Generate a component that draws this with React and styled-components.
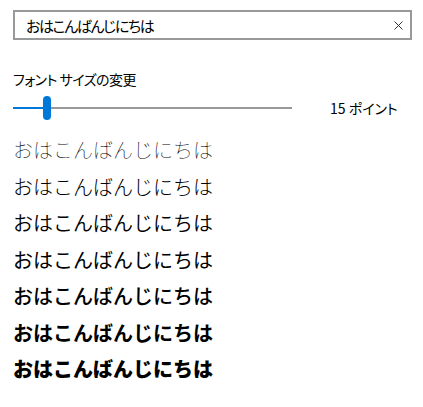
import React, { useState } from "react";
import styled, { createGlobalStyle } from "styled-components";

const GlobalStyle = createGlobalStyle`
  body {
    margin: 0;
    background: #fff;
    font-family: "Noto Sans CJK JP", "Noto Sans", sans-serif;
    color: #000;
  }
`;

const Page = styled.div`
  padding: 10px 11px 0 13px;
  display: flex;
  flex-direction: column;
`;

const SearchBox = styled.div`
  box-sizing: border-box;
  width: 399px;
  height: 30px;
  border: 2px solid #999;
  display: flex;
  align-items: center;
  padding: 0 7px 0 11px;
`;

const SearchInput = styled.input`
  flex: 1;
  border: none;
  outline: none;
  padding: 0;
  font-family: inherit;
  font-size: 15px;
  letter-spacing: -1.4px;
  font-feature-settings: "palt";
  color: #000;
  background: transparent;
`;

const ClearButton = styled.button`
  border: none;
  background: none;
  padding: 0;
  width: 9px;
  height: 9px;
  display: flex;
  cursor: pointer;
`;

const Label = styled.div`
  margin-top: 29px;
  font-size: 14px;
  line-height: 20px;
  letter-spacing: -0.5px;
  font-feature-settings: "palt";
  color: #000;
`;

const SliderRow = styled.div`
  margin-top: 7px;
  height: 24px;
  display: flex;
  align-items: center;
`;

const Track = styled.div`
  position: relative;
  width: 279px;
  height: 2px;
  background: #999;
`;

const Fill = styled.div`
  height: 2px;
  background: #0078d7;
`;

const Thumb = styled.div`
  position: absolute;
  top: -11px;
  width: 8px;
  height: 24px;
  border-radius: 4px;
  background: #0078d7;
`;

const Value = styled.div`
  margin-left: 38px;
  font-size: 14px;
  font-feature-settings: "palt";
  white-space: nowrap;
`;

const Samples = styled.div`
  margin-top: 12px;
  display: flex;
  flex-direction: column;
`;

const Sample = styled.div`
  font-size: 20px;
  line-height: 36.5px;
  font-weight: ${(p) => p.$weight};
  white-space: nowrap;
`;

const weights = [100, 300, 350, 400, 500, 700, 900];

export default function App() {
  const [text, setText] = useState("おはこんばんじにちは");
  const size = 15;
  const ratio = 0.11;

  return (
    <>
      <GlobalStyle />
      <Page>
        <SearchBox>
          <SearchInput value={text} onChange={(e) => setText(e.target.value)} />
          <ClearButton onClick={() => setText("")} aria-label="clear">
            <svg width="9" height="9" viewBox="0 0 9 9">
              <path d="M0.5 0.5 L8.5 8.5 M8.5 0.5 L0.5 8.5" stroke="#333" strokeWidth="1" />
            </svg>
          </ClearButton>
        </SearchBox>
        <Label>フォント サイズの変更</Label>
        <SliderRow>
          <Track>
            <Fill style={{ width: `${ratio * 279}px` }} />
            <Thumb style={{ left: `${ratio * 279 - 1}px` }} />
          </Track>
          <Value>{size} ポイント</Value>
        </SliderRow>
        <Samples>
          {weights.map((w) => (
            <Sample key={w} $weight={w}>
              {text}
            </Sample>
          ))}
        </Samples>
      </Page>
    </>
  );
}
